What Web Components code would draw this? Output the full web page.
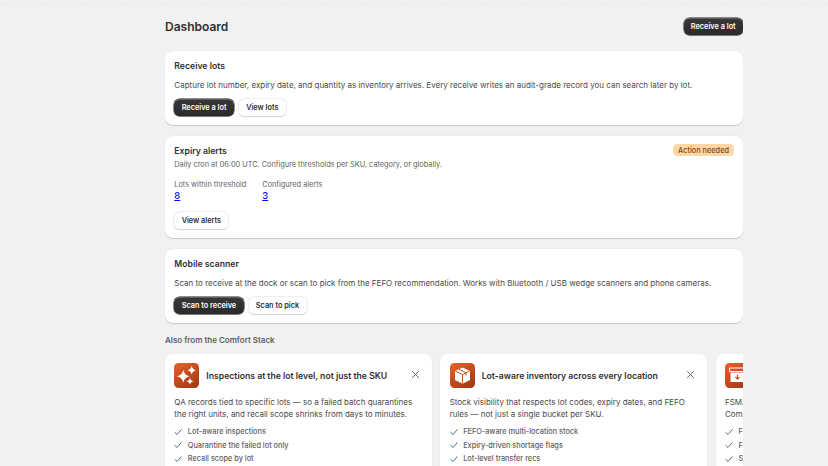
<!doctype html>
<html>
<head>
<meta charset="utf-8">
<title>Dashboard</title>
<style>
html,body{margin:0;height:466px;overflow:hidden;background:#f1f1f1}
body{font-family:Inter,"Liberation Sans",sans-serif;color:#303030}
</style>
</head>
<body>
<template id="t-btn">
  <style>
    :host{display:inline-flex}
    span{display:inline-flex;align-items:center;height:17.33px;padding:0 7.3px;border-radius:5.5px;font-size:7.33px;font-weight:600;white-space:nowrap;box-sizing:border-box;
      background:#fff;color:#303030;box-shadow:0 0 0 .5px #dfdfdf,0 1px 1px rgba(0,0,0,.22)}
    :host([primary]) span{background:linear-gradient(#383838,#2a2a2a);color:#fff;box-shadow:0 0 0 .5px #1c1c1c,inset 0 1px 0 rgba(255,255,255,.2),0 1px 1px rgba(0,0,0,.15)}
  </style>
  <span><slot></slot></span>
</template>
<template id="t-card">
  <style>
    :host{display:block;background:#fff;border-radius:8px;padding:10.5px 9.33px 9px;box-shadow:0 1px 1px rgba(0,0,0,.16),0 0 0 .4px rgba(0,0,0,.04)}
    .head{display:flex;justify-content:space-between;align-items:center;height:11px}
    h2{margin:0;font-size:8.67px;line-height:11px;font-weight:600;color:#303030}
  </style>
  <div class="head"><h2></h2><slot name="badge"></slot></div>
  <slot></slot>
</template>
<template id="t-promo">
  <style>
    :host{display:block;flex:0 0 266.67px;width:266.67px;min-width:0;box-sizing:border-box;height:140px;background:#fff;border-radius:8px;padding:9.33px;box-shadow:0 1px 1px rgba(0,0,0,.16);overflow:hidden}
    .top{display:flex;align-items:center;gap:7px;height:25px;position:relative}
    .icon{flex:0 0 25px;width:25px;height:25px}
    h3{margin:0;font-size:8.67px;font-weight:600;color:#303030;white-space:nowrap}
    .x{position:absolute;right:1.5px;top:6px;width:11px;height:11px}
    p{margin:7.5px 0 0;font-size:8px;line-height:12px;color:#4a4a4a;white-space:nowrap}
    ::slotted(ul){margin:5.5px 0 0;padding:0;list-style:none}
  </style>
  <div class="top">
    <div class="icon"><slot name="icon"></slot></div>
    <h3></h3>
    <svg class="x" viewBox="0 0 11 11"><path d="M2.5 2.5l6 6M8.5 2.5l-6 6" stroke="#6b6b6b" stroke-width="1" fill="none" stroke-linecap="round"/></svg>
  </div>
  <p><slot name="text"></slot></p>
  <slot></slot>
</template>
<template id="t-check">
  <style>
    :host{display:flex;align-items:center;gap:5.5px;height:13.3px;font-size:7.33px;color:#616161;white-space:nowrap;font-weight:500}
    svg{flex:0 0 8px;width:8px;height:8px}
  </style>
  <svg viewBox="0 0 8 8"><path d="M.8 4.4l2.2 2.1L7.2 1.7" stroke="#3f5f80" stroke-width=".9" fill="none" stroke-linecap="round" stroke-linejoin="round"/></svg>
  <slot></slot>
</template>
<template id="t-app">
  <style>
    :host{display:flex;height:466px;box-sizing:border-box;padding-left:165px;overflow:hidden;position:relative}
    :host::before{content:"";position:absolute;left:0;right:0;top:3px;border-top:1px dashed #e9e9e9}
    main{width:578px;flex:none;overflow:hidden;padding-top:18px}
    .title{display:flex;justify-content:space-between;align-items:center;height:17.33px;margin-bottom:15.67px}
    h1{margin:0;font-size:12px;line-height:17px;font-weight:600;color:#303030}
    .stack{display:flex;flex-direction:column;gap:11px}
    h4{margin:12px 0 0;font-size:8px;line-height:10px;font-weight:600;color:#616161}
    .row{display:flex;gap:8.67px;margin-top:9px;padding-bottom:4px;overflow:hidden;width:578px}
  </style>
  <main>
    <div class="title"><h1>Dashboard</h1><x-btn primary>Receive a lot</x-btn></div>
    <div class="stack"><slot name="cards"></slot></div>
    <h4>Also from the Comfort Stack</h4>
    <div class="row"><slot name="promos"></slot></div>
  </main>
</template>

<x-app>
  <x-card slot="cards" title-text="Receive lots" style="height:74px;box-sizing:border-box">
    <x-copy gap="7">Capture lot number, expiry date, and quantity as inventory arrives. Every receive writes an audit-grade record you can search later by lot.</x-copy>
    <x-actions top="7.2"><x-btn primary>Receive a lot</x-btn><x-btn>View lots</x-btn></x-actions>
  </x-card>
  <x-card slot="cards" title-text="Expiry alerts" style="height:102px;box-sizing:border-box">
    <x-badge slot="badge">Action needed</x-badge>
    <x-copy gap="2" muted>Daily cron at 06:00 UTC. Configure thresholds per SKU, category, or globally.</x-copy>
    <x-stats>
      <x-stat label="Lots within threshold">8</x-stat>
      <x-stat label="Configured alerts">3</x-stat>
    </x-stats>
    <x-actions top="9.5"><x-btn>View alerts</x-btn></x-actions>
  </x-card>
  <x-card slot="cards" title-text="Mobile scanner" style="height:74px;box-sizing:border-box">
    <x-copy gap="7">Scan to receive at the dock or scan to pick from the FEFO recommendation. Works with Bluetooth / USB wedge scanners and phone cameras.</x-copy>
    <x-actions top="7.2"><x-btn primary>Scan to receive</x-btn><x-btn>Scan to pick</x-btn></x-actions>
  </x-card>

  <x-promo slot="promos" title-text="Inspections at the lot level, not just the SKU">
    <svg slot="icon" viewBox="0 0 25 25" width="25" height="25">
      <defs><linearGradient id="g1" x1="0" y1="0" x2=".7" y2="1"><stop offset="0" stop-color="#e8622c"/><stop offset="1" stop-color="#a83a14"/></linearGradient></defs>
      <rect width="25" height="25" rx="4.5" fill="url(#g1)"/>
      <path d="M9.3 6.800Q10.300 12.300 15.800 13.300 10.300 14.300 9.300 19.800 8.300 14.300 2.800 13.300 8.300 12.300 9.300 6.800z" fill="#fff"/>
      <path d="M17.700 2.800Q18.400 6.600 22.200 7.300 18.400 8 17.700 11.800 17 8 13.200 7.300 17 6.600 17.700 2.800z" fill="#fff"/>
      <path d="M16 14.800Q16.500 17.800 19.500 18.300 16.500 18.800 16 21.800 15.500 18.800 12.500 18.300 15.500 17.800 16 14.800z" fill="#fff"/>
    </svg>
    <span slot="text">QA records tied to specific lots — so a failed batch quarantines<br>the right units, and recall scope shrinks from days to minutes.</span>
    <ul>
      <x-check>Lot-aware inspections</x-check>
      <x-check>Quarantine the failed lot only</x-check>
      <x-check>Recall scope by lot</x-check>
    </ul>
  </x-promo>
  <x-promo slot="promos" title-text="Lot-aware inventory across every location">
    <svg slot="icon" viewBox="0 0 25 25" width="25" height="25">
      <defs><linearGradient id="g2" x1="0" y1="0" x2=".7" y2="1"><stop offset="0" stop-color="#e8622c"/><stop offset="1" stop-color="#a83a14"/></linearGradient></defs>
      <rect width="25" height="25" rx="4.5" fill="url(#g2)"/>
      <path d="M12.500 4.500l7.500 3.500v9l-7.500 3.700-7.500-3.700V8z" fill="#fff"/>
      <path d="M5.500 8.200l7 3.400 7-3.400M12.500 11.600v8.800M9 6.300l7 3.600v2.600" fill="none" stroke="#c4511f" stroke-width="1"/>
    </svg>
    <span slot="text">Stock visibility that respects lot codes, expiry dates, and FEFO<br>rules — not just a single bucket per SKU.</span>
    <ul>
      <x-check>FEFO-aware multi-location stock</x-check>
      <x-check>Expiry-driven shortage flags</x-check>
      <x-check>Lot-level transfer recs</x-check>
    </ul>
  </x-promo>
  <x-promo slot="promos" title-text="Traceability records">
    <svg slot="icon" viewBox="0 0 25 25" width="25" height="25">
      <defs><linearGradient id="g3" x1="0" y1="0" x2=".7" y2="1"><stop offset="0" stop-color="#e8622c"/><stop offset="1" stop-color="#a83a14"/></linearGradient></defs>
      <rect width="25" height="25" rx="4.5" fill="url(#g3)"/>
      <path d="M4.500 5h16v3.500h-16z" fill="none" stroke="#fff" stroke-width="1"/>
      <path d="M5.500 9.500h14V19h-14z" fill="#fff"/>
      <path d="M12.500 11.500v4.500M10.500 14.200l2 2 2-2" fill="none" stroke="#c4511f" stroke-width="1.200"/>
    </svg>
    <span slot="text">FSMA 204 traceability records.<br>Compliance exports on demand.</span>
    <ul>
      <x-check>FSMA 204 lot records</x-check>
      <x-check>FDA-ready exports</x-check>
      <x-check>Supplier lot links</x-check>
    </ul>
  </x-promo>
</x-app>

<script>
function fromTemplate(el, id) {
    let root = el.attachShadow({ mode: "open" });
    root.append(document.getElementById(id).content.cloneNode(true));
    return root;
}
customElements.define("x-btn", class extends HTMLElement {
    connectedCallback() { if (!this.shadowRoot) fromTemplate(this, "t-btn"); }
});
customElements.define("x-card", class extends HTMLElement {
    connectedCallback() {
        if (this.shadowRoot) return;
        fromTemplate(this, "t-card").querySelector("h2").textContent = this.getAttribute("title-text");
    }
});
customElements.define("x-promo", class extends HTMLElement {
    connectedCallback() {
        if (this.shadowRoot) return;
        fromTemplate(this, "t-promo").querySelector("h3").textContent = this.getAttribute("title-text");
    }
});
customElements.define("x-check", class extends HTMLElement {
    connectedCallback() { if (!this.shadowRoot) fromTemplate(this, "t-check"); }
});
customElements.define("x-app", class extends HTMLElement {
    connectedCallback() { if (!this.shadowRoot) fromTemplate(this, "t-app"); }
});
customElements.define("x-copy", class extends HTMLElement {
    connectedCallback() {
        if (this.shadowRoot) return;
        let gap = this.getAttribute("gap") || 0;
        this.attachShadow({ mode: "open" }).innerHTML =
            `<style>:host{display:block;margin-top:${gap}px;font-size:8px;line-height:12px;color:#4a4a4a;white-space:nowrap}
            :host([muted]){font-size:7.33px;color:#616161}</style><slot></slot>`;
    }
});
customElements.define("x-actions", class extends HTMLElement {
    connectedCallback() {
        if (this.shadowRoot) return;
        let top = this.getAttribute("top") || 0;
        this.attachShadow({ mode: "open" }).innerHTML =
            `<style>:host{display:flex;gap:5px;margin-top:${top}px}</style><slot></slot>`;
    }
});
customElements.define("x-badge", class extends HTMLElement {
    connectedCallback() {
        if (this.shadowRoot) return;
        this.attachShadow({ mode: "open" }).innerHTML =
            `<style>:host{display:inline-flex;align-items:center;height:12px;margin-top:-3px;padding:0 4.7px;border-radius:4.5px;background:#ffd6a4;color:#7a4b17;font-size:7.33px;font-weight:500;white-space:nowrap}</style><slot></slot>`;
    }
});
customElements.define("x-stats", class extends HTMLElement {
    connectedCallback() {
        if (this.shadowRoot) return;
        this.attachShadow({ mode: "open" }).innerHTML =
            `<style>:host{display:flex;gap:16px;margin-top:8px}</style><slot></slot>`;
    }
});
customElements.define("x-stat", class extends HTMLElement {
    connectedCallback() {
        if (this.shadowRoot) return;
        this.attachShadow({ mode: "open" }).innerHTML =
            `<style>:host{display:block}
            div{font-size:7.33px;line-height:11px;color:#616161}
            a{display:block;font-size:9.33px;line-height:12px;font-weight:500;color:#0000ee;text-decoration:underline}</style>
            <div>${this.getAttribute("label")}</div><a href="#"><slot></slot></a>`;
    }
});
</script>
</body>
</html>
